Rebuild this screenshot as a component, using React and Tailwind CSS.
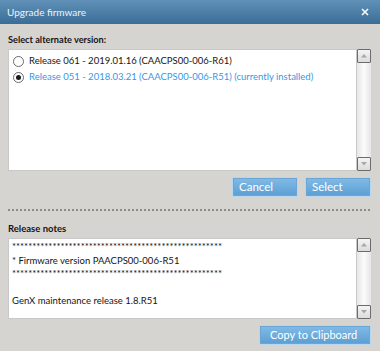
const ScrollBtn = ({ down }) => (
  <div className="flex h-[14px] w-[14px] items-center justify-center rounded-[1px] border border-[#6b6b6b] bg-gradient-to-b from-[#f4f4f4] to-[#dcdcdc]">
    <svg width="6" height="4" viewBox="0 0 6 4">
      <path d={down ? 'M0 0 L6 0 L3 3.5 Z' : 'M0 3.5 L6 3.5 L3 0 Z'} fill="#a8a8a8" />
    </svg>
  </div>
);

const ScrollBar = () => (
  <div className="flex w-[14px] flex-col justify-between bg-gradient-to-r from-[#e6e6e6] via-[#fbfbfb] to-[#e6e6e6]">
    <ScrollBtn />
    <ScrollBtn down />
  </div>
);

const Radio = ({ checked }) => (
  <span className="flex h-[11px] w-[11px] shrink-0 items-center justify-center rounded-full border border-[#6a6a6a] bg-white">
    {checked && <span className="h-[5px] w-[5px] rounded-full bg-[#1b1b1b]" />}
  </span>
);

const Btn = ({ children, className }) => (
  <button className={`h-[20px] whitespace-nowrap border border-[#b9d6ec] bg-gradient-to-b from-[#82bbe6] to-[#5b9ed3] pb-[1px] text-left leading-none text-white shadow-[inset_0_0_0_1px_#6aa6d6] ${className}`}>
    {children}
  </button>
);

const versions = [
  { label: 'Release 061 - 2019.01.16 (CAACPS00-006-R61)', checked: false },
  { label: 'Release 051 - 2018.03.21 (CAACPS00-006-R51) (currently installed)', checked: true },
];

const stars = '*'.repeat(52);

export default function App() {
  return (
    <div className="flex h-[351px] w-[380px] flex-col bg-[#d5d4d0] font-['Lato',sans-serif] text-[9.5px] text-[#151515]">
      {/* Title bar */}
      <div className="flex h-[24px] items-center justify-between bg-gradient-to-b from-[#6191b9] to-[#3a6d96] pl-[7px] pr-[11px] text-[10px] text-[#eef3f8]">
        <span>Upgrade firmware</span>
        <svg width="8" height="8" viewBox="0 0 8 8">
          <path d="M1 1 L7 7 M7 1 L1 7" stroke="#f4f7fa" strokeWidth="1.7" />
        </svg>
      </div>

      <div className="flex flex-1 flex-col pl-[8px] pr-[9px]">
        <div className="mt-[8px] h-[16px] whitespace-nowrap text-[9.2px] font-bold leading-[16px]">Select alternate version:</div>

        {/* Version list */}
        <div className="mt-[1px] flex h-[122px]">
          <div className="flex-1 border border-[#c9c9c9] bg-white pt-[3px]">
            {versions.map(v => (
              <div key={v.label} className="flex h-[16px] items-center gap-[5px] pl-[4px]">
                <Radio checked={v.checked} />
                <span className={`whitespace-nowrap leading-[16px] ${v.checked ? 'text-[#3598e8]' : ''}`}>{v.label}</span>
              </div>
            ))}
          </div>
          <ScrollBar />
        </div>

        <div className="mt-[6px] flex justify-end gap-[7px]">
          <Btn className="w-[66px] pl-[6px] text-[11.5px]">Cancel</Btn>
          <Btn className="w-[66px] pl-[6px] text-[11.5px]">Select</Btn>
        </div>

        <div className="mt-[12px] h-[2px] bg-[linear-gradient(to_right,#8c8c8c_50%,transparent_50%)] bg-[length:4px_2px]" />

        <div className="mt-[10px] h-[16px] font-bold leading-[16px]">Release notes</div>

        {/* Notes */}
        <div className="mt-[1px] flex h-[81px]">
          <div className="flex-1 overflow-hidden whitespace-nowrap border border-[#c9c9c9] bg-white pl-[3px] pt-[1px] leading-[13.5px]">
            <div>{stars}</div>
            <div>* Firmware version PAACPS00-006-R51</div>
            <div>{stars}</div>
            <div>&nbsp;</div>
            <div>GenX maintenance release 1.8.R51</div>
          </div>
          <ScrollBar />
        </div>

        <div className="mt-[6px] flex justify-end">
          <Btn className="w-[112px] pl-[10px] text-[11px]">Copy to Clipboard</Btn>
        </div>
      </div>
    </div>
  );
}
